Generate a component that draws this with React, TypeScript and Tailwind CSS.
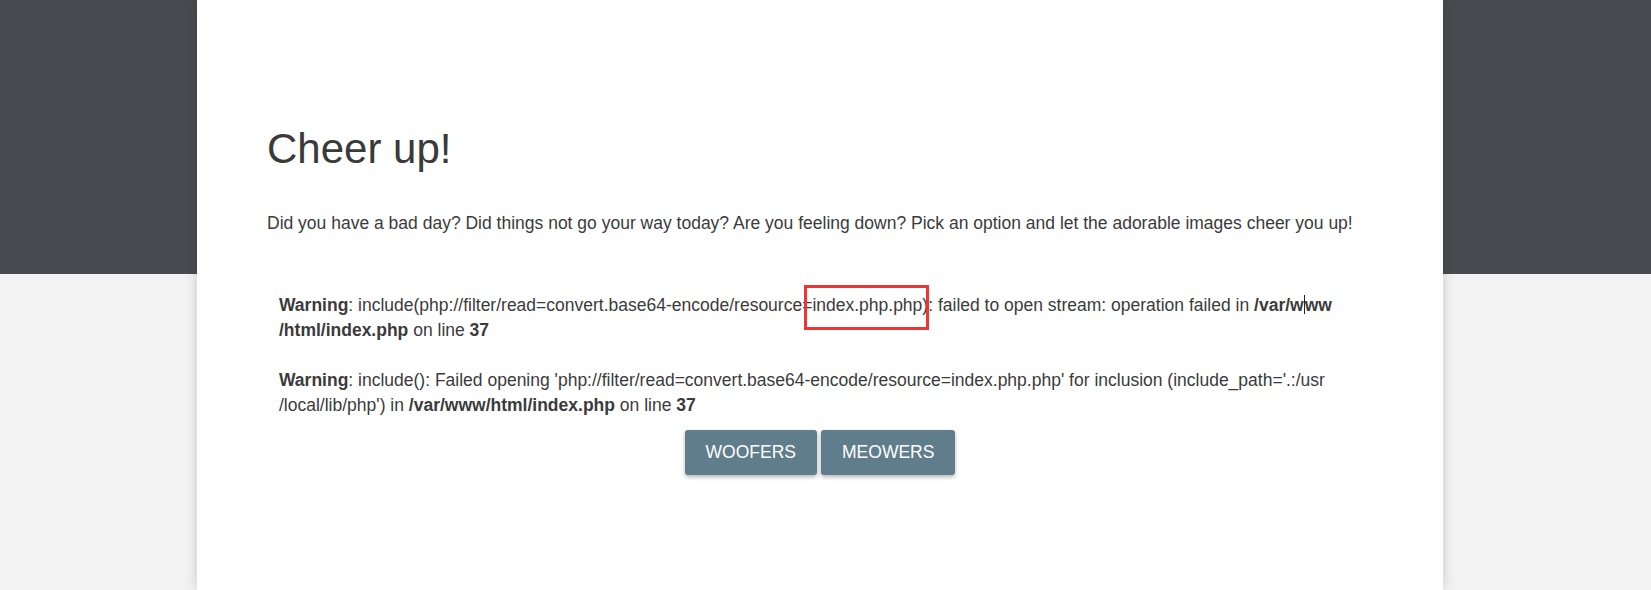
import React from 'react';

const Warning: React.FC<{ children: React.ReactNode }> = ({ children }) => (
  <div className="whitespace-nowrap">{children}</div>
);

const App: React.FC = () => {
  return (
    <div className="min-h-[590px] bg-[linear-gradient(to_bottom,#4a4b50_274px,#f3f3f3_274px)] pr-[11px] font-['Liberation_Sans',Arial,sans-serif] text-[#3b3b3b]">
      <div className="mx-auto w-[1246px] min-h-[590px] bg-white shadow-[0_0_12px_rgba(0,0,0,0.18)] pl-[70px] pr-[60px] pt-[122px]">
        <h1 className="text-[42px] leading-[54px] text-[#3a3a3a]">Cheer up!</h1>

        <p className="mt-[35px] text-[17.5px] leading-[24px]">
          Did you have a bad day? Did things not go your way today? Are you feeling down? Pick an option and let the
          adorable images cheer you up!
        </p>

        <div className="mt-[57px] pl-[12px] text-[17.5px] leading-[25px]">
          <Warning>
            <b>Warning</b>: include(php://filter/read=convert.base64-encode/resource
            <span className="relative">
              =index.php.php)
              <span className="pointer-events-none absolute left-[2px] -right-[1px] -top-[10px] h-[45px] border-[3px] border-[#ee3535]" />
            </span>
            : failed to open stream: operation failed in{' '}
            <b>
              /var/w<span className="inline-block h-[19px] w-px translate-y-[3px] bg-[#222]" />ww
            </b>
            <br />
            <b>/html/index.php</b> on line <b>37</b>
          </Warning>
          <br />
          <Warning>
            <b>Warning</b>: include(): Failed opening 'php://filter/read=convert.base64-encode/resource=index.php.php' for
            inclusion (include_path='.:/usr
            <br />
            /local/lib/php') in <b>/var/www/html/index.php</b> on line <b>37</b>
          </Warning>
        </div>

        <div className="mt-[12px] flex justify-center gap-[4px] pr-[10px]">
          <button className="h-[45px] rounded-[3px] bg-[#607d8b] px-[21px] text-[17.5px] uppercase text-white shadow-[0_2px_4px_rgba(0,0,0,0.3)]">
            Woofers
          </button>
          <button className="h-[45px] rounded-[3px] bg-[#607d8b] px-[21px] text-[17.5px] uppercase text-white shadow-[0_2px_4px_rgba(0,0,0,0.3)]">
            Meowers
          </button>
        </div>
      </div>
    </div>
  );
};

export default App;
